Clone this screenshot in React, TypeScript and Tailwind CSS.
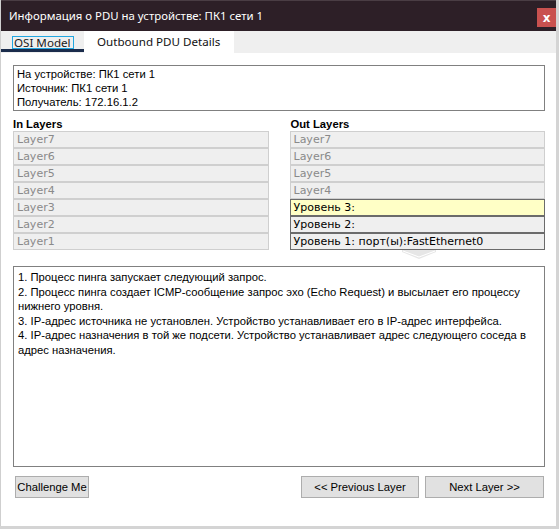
import React from "react";

const inLayers = ["Layer7", "Layer6", "Layer5", "Layer4", "Layer3", "Layer2", "Layer1"];

export default function App() {
  return (
    <div className="w-[559px] h-[529px] bg-[#d4d4d4] relative overflow-hidden">
      <div className="w-[556px] h-[526px] bg-white flex flex-col border-l border-[#cfcfcf]">
        {/* Title bar */}
        <div className="h-[31px] bg-[#2d1f27] border-t border-[#4a3d44] flex items-start justify-between">
          <div
            className="pl-[8px] pt-[7px] text-white text-[11.4px] leading-[16px] whitespace-nowrap"
            style={{ fontFamily: '"Noto Sans", "Open Sans", sans-serif' }}
          >
            Информация о PDU на устройстве: ПК1 сети 1
          </div>
          <div className="mt-[7px] w-[19px] h-[19px] bg-[#c9514f] flex items-center justify-center text-white text-[12px] font-bold leading-none"
            style={{ fontFamily: '"DejaVu Sans", sans-serif' }}>
            x
          </div>
        </div>
        {/* Tabs */}
        <div className="h-[22px] bg-[#efefef] flex text-[11.6px] whitespace-nowrap" style={{ fontFamily: '"Noto Sans", "Open Sans", sans-serif' }}>
          <div className="w-[83px] h-full relative bg-[#efefef] flex items-start pl-[11px] pt-[5px]">
            <span className="border border-[#22a7e0] w-[62px] pl-[1px] leading-[12px] text-[#1a1a1a] h-[13px] flex items-center">OSI Model</span>
            <div className="absolute left-0 right-0 bottom-[1px] h-[3px] bg-[#1b2c4c]" />
          </div>
          <div className="w-[150px] h-full bg-white pl-[13px] pt-[3px] text-[#111] leading-[16px]">Outbound PDU Details</div>
        </div>
        {/* Content */}
        <div className="flex-1 flex flex-col pl-[12px] pr-[11px] pt-[12px]" style={{ fontFamily: '"Liberation Sans", Arial, sans-serif' }}>
          <div className="h-[46px] border border-[#808080] pl-[3px] pt-[1px] text-[11.25px] leading-[14px] text-black">
            <div>На устройстве: ПК1 сети 1</div>
            <div>Источник: ПК1 сети 1</div>
            <div>Получатель: 172.16.1.2</div>
          </div>
          <div className="flex gap-[21px] mt-[6px]">
            <div className="w-[256px] flex flex-col">
              <div className="text-[11.25px] font-bold leading-[14px] h-[14px] text-black">In Layers</div>
              <div className="flex flex-col" style={{ fontFamily: '"DejaVu Sans", Verdana, sans-serif' }}>
                {inLayers.map((l) => (
                  <div key={l} className="h-[17px] bg-[#efefef] border border-[#cfcfcf] pl-[3px] text-[11px] leading-[15px] text-[#8a8a8a]">
                    {l}
                  </div>
                ))}
              </div>
            </div>
            <div className="w-[256px] flex flex-col">
              <div className="text-[11.25px] font-bold leading-[14px] h-[14px] text-black pl-[1px]">Out Layers</div>
              <div className="flex flex-col" style={{ fontFamily: '"DejaVu Sans", Verdana, sans-serif' }}>
                {["Layer7", "Layer6", "Layer5", "Layer4"].map((l) => (
                  <div key={l} className="h-[17px] bg-[#efefef] border border-[#cfcfcf] pl-[3px] text-[11px] leading-[15px] text-[#8a8a8a]">
                    {l}
                  </div>
                ))}
                <div className="h-[17px] bg-[#ffffc6] border border-[#6b6b6b] pl-[3px] text-[11px] leading-[15px] text-black">Уровень 3:</div>
                <div className="h-[17px] bg-[#efefef] border border-[#6b6b6b] pl-[3px] text-[11px] leading-[15px] text-black">Уровень 2:</div>
                <div className="h-[17px] bg-[#efefef] border border-[#6b6b6b] pl-[3px] text-[11px] leading-[15px] text-black">Уровень 1: порт(ы):FastEthernet0</div>
              </div>
              <div className="h-[16px] flex justify-start pl-[112px]">
                <svg width="34" height="10" viewBox="0 0 34 10">
                  <polygon points="0,0 34,0 34,2 17,9 0,2" fill="#e6e6e6" />
                  <polyline points="1,1 17,7 33,1" fill="none" stroke="#ffffff" strokeWidth="1" />
                </svg>
              </div>
            </div>
          </div>
          <div className="h-[201px] border border-[#808080] pl-[4px] pt-[3px] text-[11.25px] leading-[14.5px] text-black">
            <div>1. Процесс пинга запускает следующий запрос.</div>
            <div>2. Процесс пинга создает ICMP-сообщение запрос эхо (Echo Request) и высылает его процессу нижнего уровня.</div>
            <div>3. IP-адрес источника не установлен. Устройство устанавливает его в IP-адрес интерфейса.</div>
            <div>4. IP-адрес назначения в той же подсети. Устройство устанавливает адрес следующего соседа в адрес назначения.</div>
          </div>
          <div className="flex items-start mt-[9px] text-[11.25px] text-black whitespace-nowrap">
            <button className="ml-[2px] h-[22px] w-[74px] bg-[#e1e1e1] border border-[#adadad] leading-[20px]">Challenge Me</button>
            <div className="flex-1" />
            <button className="h-[22px] w-[118px] bg-[#e1e1e1] border border-[#adadad] leading-[20px]">&lt;&lt; Previous Layer</button>
            <button className="ml-[6px] mr-[1px] h-[22px] w-[119px] bg-[#e1e1e1] border border-[#adadad] leading-[20px]">Next Layer &gt;&gt;</button>
          </div>
        </div>
      </div>
    </div>
  );
}
